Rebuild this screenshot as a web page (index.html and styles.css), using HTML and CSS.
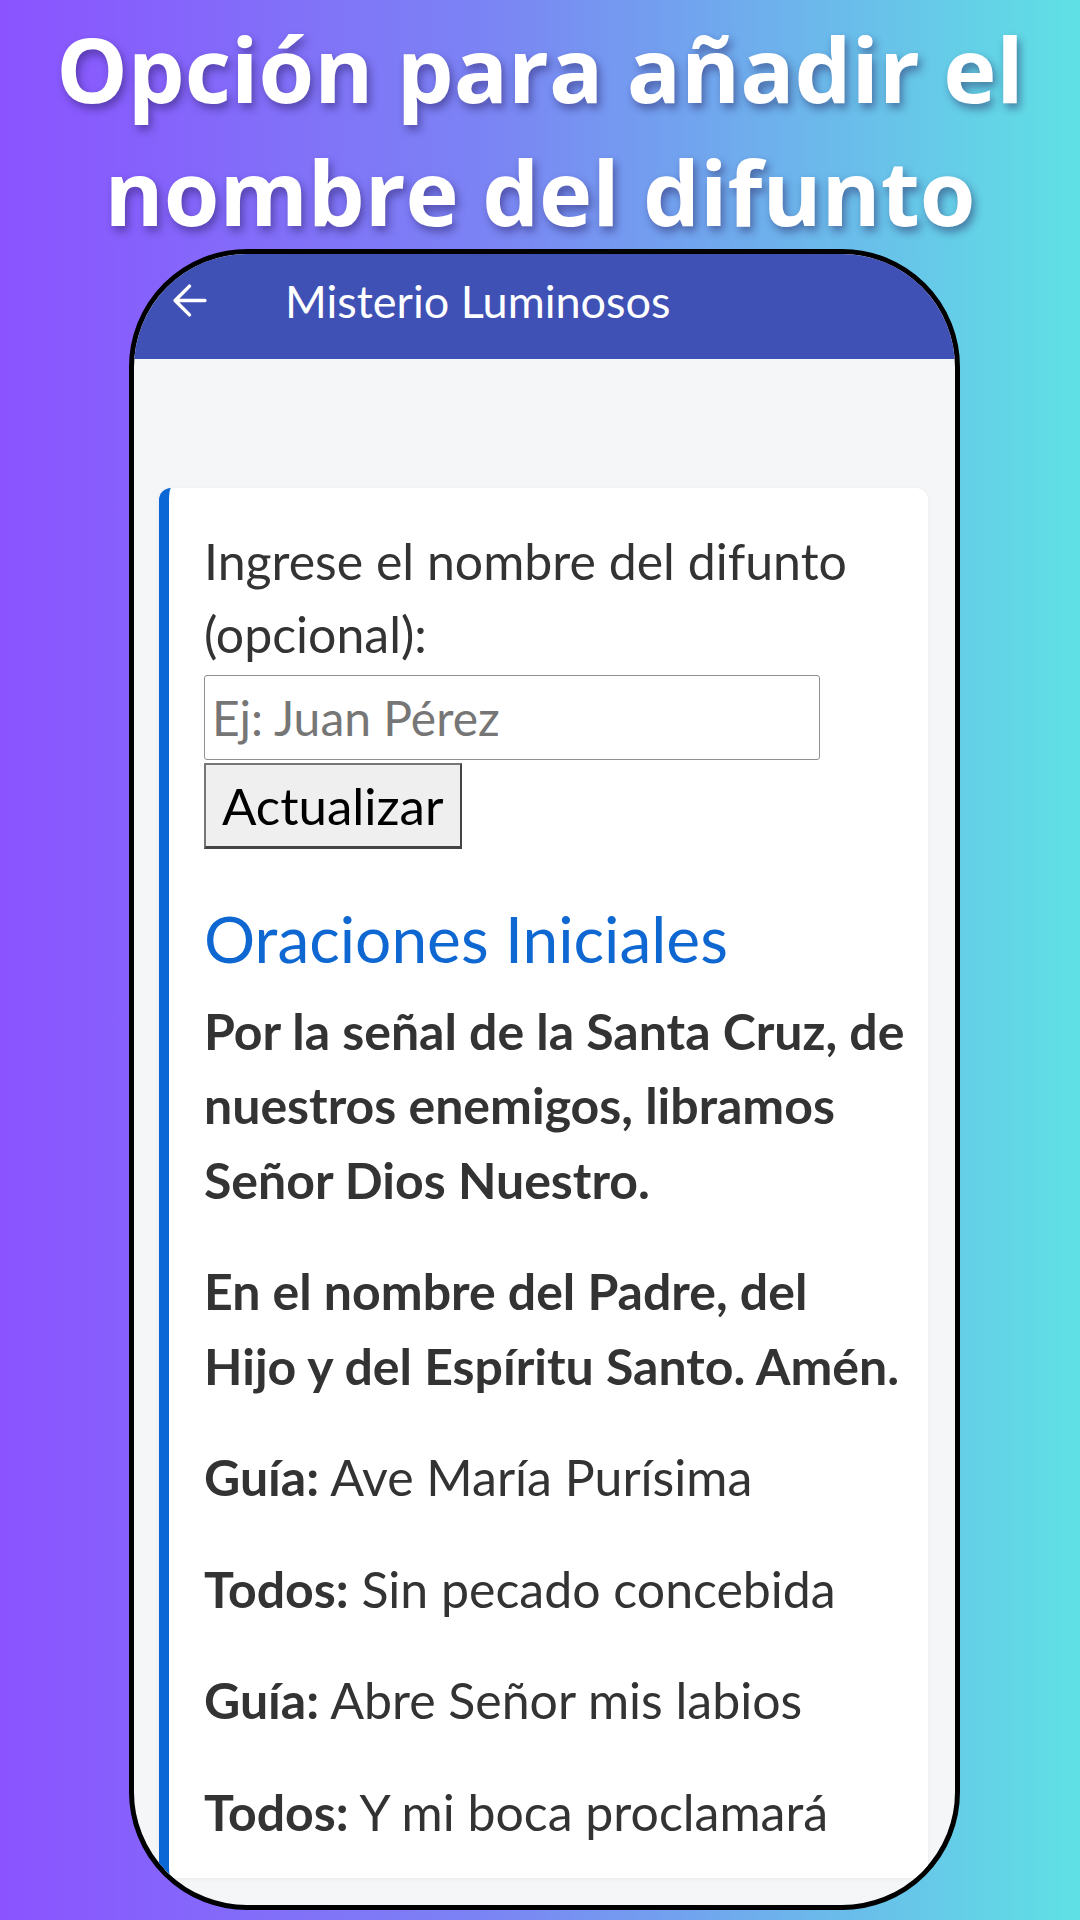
FILE: index.html
```html
<!DOCTYPE html>
<html lang="es">
<head>
    <meta charset="UTF-8">
    <meta name="viewport" content="width=device-width, initial-scale=1.0">
    <title>Misterio Luminosos</title>
    <link rel="stylesheet" href="styles.css">
</head>
<body>
    <h1 class="headline">Opción para añadir el<br>nombre del difunto</h1>

    <div class="phone">
        <header class="appbar">
            <svg class="back" viewBox="0 0 36 36" width="37" height="37">
                <path d="M33 18H4M18 4L4 18l14 14" fill="none" stroke="#fff" stroke-width="3.4" stroke-linecap="round" stroke-linejoin="round"/>
            </svg>
            <span class="appbar-title">Misterio Luminosos</span>
        </header>

        <main class="screen">
            <section class="card">
                <label for="difunto">Ingrese el nombre del difunto (opcional):</label>
                <input type="text" id="difunto" placeholder="Ej: Juan Pérez">
                <button>Actualizar</button>

                <h2>Oraciones Iniciales</h2>
                <p class="strong">Por la señal de la Santa Cruz, de nuestros enemigos, libramos Señor Dios Nuestro.</p>
                <p class="strong">En el nombre del Padre, del Hijo y del Espíritu Santo. Amén.</p>
                <p><b>Guía:</b> Ave María Purísima</p>
                <p><b>Todos:</b> Sin pecado concebida</p>
                <p><b>Guía:</b> Abre Señor mis labios</p>
                <p><b>Todos:</b> Y mi boca proclamará</p>
            </section>
        </main>
    </div>
</body>
</html>
```

FILE: styles.css
```css
body {
    margin: 0;
    width: 1080px;
    height: 1920px;
    overflow: hidden;
    background: linear-gradient(90deg, #8b53ff 0%, #7b84f4 45%, #5fe1e4 100%);
    font-family: Lato, "Noto Sans", sans-serif;
}

.headline {
    margin: 0;
    padding-top: 7px;
    font-family: "Open Sans", sans-serif;
    font-weight: 700;
    font-size: 90px;
    line-height: 123px;
    color: #fff;
    text-align: center;
    text-shadow: 3px 5px 8px rgba(30, 20, 80, 0.45);
}

.phone {
    margin: -4px 0 0 129px;
    width: 821px;
    height: 1651px;
    border: 5px solid #000;
    border-radius: 118px;
    overflow: hidden;
    background-color: #f5f6f8;
}

.appbar {
    height: 105px;
    box-sizing: border-box;
    padding: 0 0 12px 37px;
    background-color: #3f51b5;
    display: flex;
    align-items: center;
    gap: 77px;
}

.back {
    flex: none;
}

.appbar-title {
    color: #fff;
    font-size: 45px;
}

.screen {
    padding: 129px 27px 0 25px;
}

.card {
    background-color: #fff;
    border-left: 10px solid #0b67d6;
    border-radius: 12px;
    padding: 37px 23px 29px 35px;
    box-shadow: 0 1px 5px rgba(0, 0, 0, 0.05);
    color: #333;
}

label {
    display: block;
    font-size: 50px;
    line-height: 73px;
}

input {
    display: block;
    box-sizing: border-box;
    margin-top: 4px;
    width: 616px;
    height: 85px;
    padding: 0 7px;
    border: 1px solid #8f8f8f;
    border-radius: 3px;
    font-family: inherit;
    font-size: 48px;
    color: #333;
}

input::placeholder {
    color: #767676;
}

button {
    display: block;
    box-sizing: border-box;
    margin-top: 3px;
    height: 86px;
    padding: 0 16px;
    background-color: #efefef;
    border: 2px solid #444;
    border-top-color: #767676;
    border-left-color: #767676;
    border-bottom-width: 3px;
    font-family: inherit;
    font-size: 51px;
    color: #000;
}

h2 {
    margin: 52px 0 16px;
    font-size: 64px;
    font-weight: 400;
    line-height: 1.2;
    color: #0f67d2;
}

p {
    margin: 0 0 37px;
    font-size: 50px;
    line-height: 74.5px;
}

p:last-child {
    margin-bottom: 0;
}

.strong,
p b {
    font-weight: 700;
}
```
